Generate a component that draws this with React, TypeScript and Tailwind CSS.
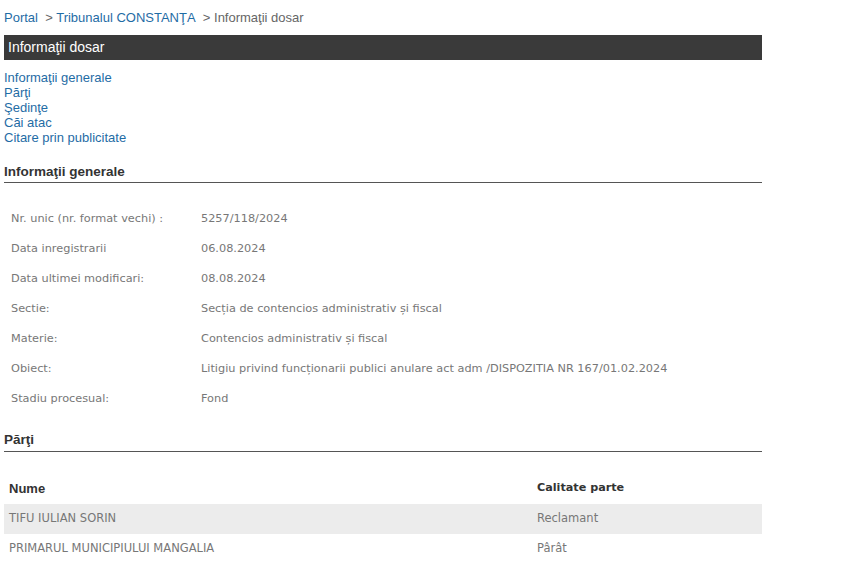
export default function App() {
  const info: [string, string][] = [
    ["Nr. unic (nr. format vechi) :", "5257/118/2024"],
    ["Data inregistrarii", "06.08.2024"],
    ["Data ultimei modificari:", "08.08.2024"],
    ["Sectie:", "Secția de contencios administrativ și fiscal"],
    ["Materie:", "Contencios administrativ și fiscal"],
    ["Obiect:", "Litigiu privind funcționarii publici anulare act adm /DISPOZITIA NR 167/01.02.2024"],
    ["Stadiu procesual:", "Fond"],
  ];
  const parti: [string, string][] = [
    ["TIFU IULIAN SORIN", "Reclamant"],
    ["PRIMARUL MUNICIPIULUI MANGALIA", "Pârât"],
  ];
  const links = ["Informaţii generale", "Părţi", "Şedinţe", "Căi atac", "Citare prin publicitate"];

  return (
    <div className="w-[855px] h-[563px] overflow-hidden bg-white font-['Liberation_Sans',Arial,sans-serif]">
      <div className="ml-1 w-[758px]">
        {/* breadcrumb */}
        <div className="pt-[10px] text-[13px] leading-[15px] text-[#666]">
          <a className="text-[#1f6ca5]">Portal</a>
          <span>&nbsp; &gt; </span>
          <a className="text-[#1f6ca5]">Tribunalul CONSTANŢA</a>
          <span>&nbsp; &gt; Informaţii dosar</span>
        </div>

        <div className="mt-[10px] h-[25px] bg-[#3a3a3a] pl-1 text-[14px] leading-[25px] text-white">
          Informaţii dosar
        </div>

        <div className="mt-[10px] flex flex-col text-[13px] leading-[15px] text-[#1f6ca5]">
          {links.map((l) => (
            <a key={l}>{l}</a>
          ))}
        </div>

        <div className="mt-[19px] border-b border-[#555] pb-[2px] text-[13.5px] font-bold leading-[16px] text-[#333]">
          Informaţii generale
        </div>

        <div className="mt-[21px] font-['DejaVu_Sans',Verdana,sans-serif] text-[11.3px] text-[#777]">
          {info.map(([k, v]) => (
            <div key={k} className="flex h-[30px] items-center">
              <div className="w-[197px] shrink-0 pl-[7px]">{k}</div>
              <div>{v}</div>
            </div>
          ))}
        </div>

        <div className="mt-[18px] border-b border-[#555] pb-[3px] text-[13.5px] font-bold leading-[16px] text-[#333]">
          Părţi
        </div>

        <div className="mt-[21px] font-['DejaVu_Sans',Verdana,sans-serif] text-[11.5px]">
          <div className="flex h-[31px] items-center font-bold text-[#333]">
            <div className="w-[528px] shrink-0 pl-[5px] font-['Liberation_Sans',Arial,sans-serif] text-[13px]">Nume</div>
            <div className="pl-[5px] text-[11.2px]">Calitate parte</div>
          </div>
          {parti.map(([n, c], i) => (
            <div key={n} className={`flex h-[30px] items-center text-[#777] ${i === 0 ? "bg-[#ececec]" : ""}`}>
              <div className="w-[528px] shrink-0 pl-[5px]">{n}</div>
              <div className="pl-[5px]">{c}</div>
            </div>
          ))}
        </div>
      </div>
    </div>
  );
}
